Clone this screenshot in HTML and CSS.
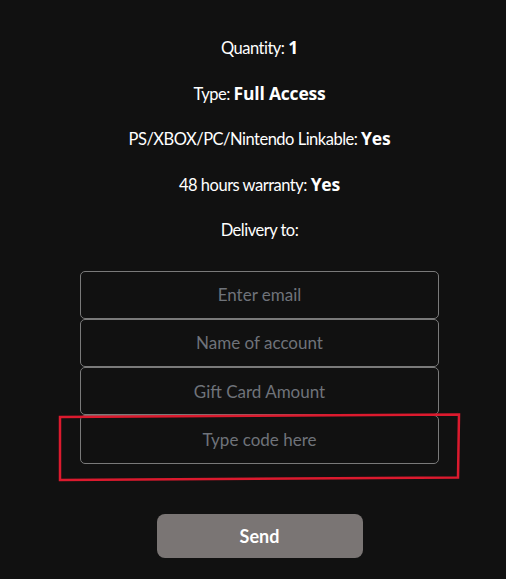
FILE: index.html
```html
<!DOCTYPE html>
<html lang="en">
<head>
  <meta charset="UTF-8">
  <title>Order details</title>
  <link rel="stylesheet" href="styles.css">
</head>
<body>
  <div class="order">
    <p class="info">Quantity: <b>1</b></p>
    <p class="info">Type: <b>Full Access</b></p>
    <p class="info">PS/XBOX/PC/Nintendo Linkable: <b>Yes</b></p>
    <p class="info">48 hours warranty: <b>Yes</b></p>
    <p class="info">Delivery to:</p>
    <form class="fields" onsubmit="return false">
      <input type="email" placeholder="Enter email">
      <input type="text" placeholder="Name of account">
      <input type="text" placeholder="Gift Card Amount">
      <input type="text" placeholder="Type code here">
      <button type="submit">Send</button>
    </form>
  </div>
  <svg class="mark" width="506" height="579" viewBox="0 0 506 579">
    <path d="M60 417 L459 414.5 L458 477.5 L60 480 Z" fill="none" stroke="#dc1a2e" stroke-width="2.5"/>
  </svg>
</body>
</html>
```
FILE: styles.css
```css
body { margin: 0; background: #111111; color: #fff; font-family: "Lato", "Liberation Sans", sans-serif; }
.order { display: flex; flex-direction: column; align-items: center; padding: 35px 0 0 13px; }
.info { height: 27px; margin: 0 0 18.5px; font-size: 16.5px; line-height: 27px; letter-spacing: -0.5px; }
.info b { font-family: "Open Sans", "Lato", sans-serif; font-size: 17.5px; font-weight: 700; line-height: 1; letter-spacing: -0.2px; }
.fields { display: flex; flex-direction: column; align-items: center; width: 100%; padding-top: 8px; }
.fields input { box-sizing: border-box; width: 359px; height: 48.3px; margin: 0; background: #111111; border: 1px solid #7a7a7a; border-radius: 5px; color: #ddd; text-align: center; font-family: inherit; font-size: 17px; outline: none; }
.fields input::placeholder { color: #6f737a; }
.mark { position: absolute; left: 0; top: 0; pointer-events: none; }
button { margin-top: 50px; width: 206px; height: 44px; border: none; border-radius: 8px; background: #7a7574; color: #fff; font-family: inherit; font-size: 18px; font-weight: 700; cursor: pointer; }
```
